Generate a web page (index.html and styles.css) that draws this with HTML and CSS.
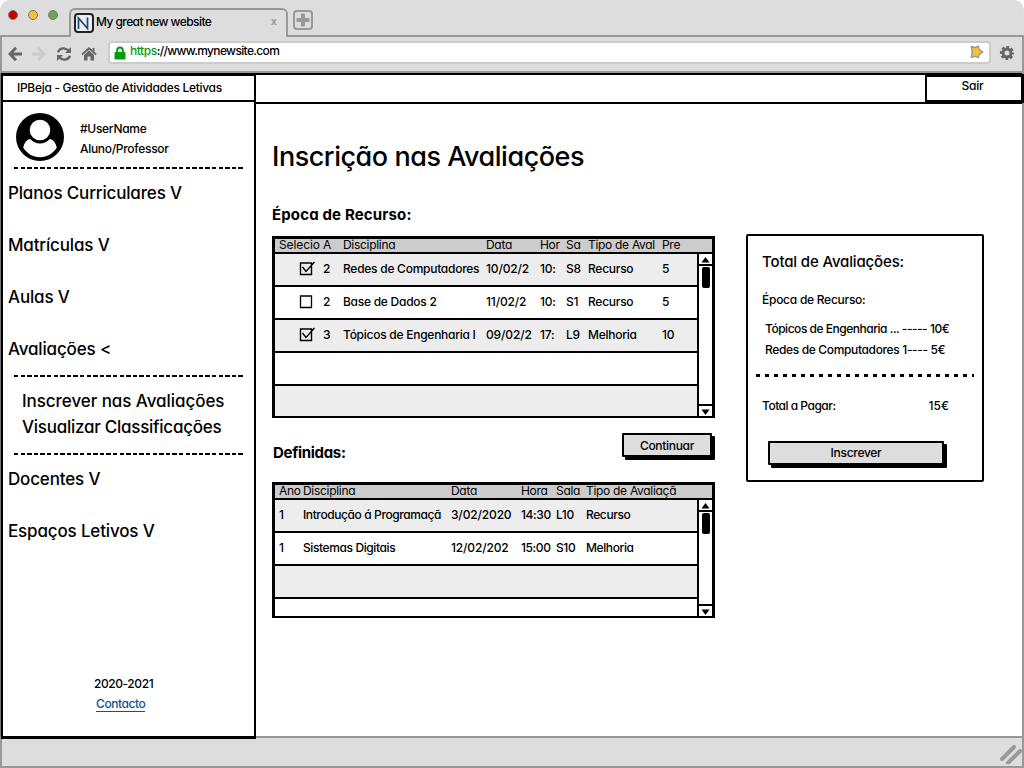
FILE: index.html
```html
<!DOCTYPE html>
<html lang="pt">
<head>
<meta charset="utf-8">
<title>My great new website</title>
<link rel="stylesheet" href="styles.css">
</head>
<body>
<div class="browser">
  <header class="tabstrip">
    <div class="lights"><i class="light red"></i><i class="light yellow"></i><i class="light green"></i></div>
    <div class="tab">
      <span class="favicon"><svg width="16" height="16" viewBox="0 0 16 16"><path d="M2.5 14V3L11.5 13.5V2.5" fill="none" stroke="#174a7c" stroke-width="1.7"/></svg></span>
      <span class="tab-title">My great new website</span>
      <span class="tab-close">x</span>
    </div>
    <div class="strip-rest">
      <span class="newtab"><svg width="16" height="16" viewBox="0 0 16 16"><path d="M8 1.5v13M1.5 8h13" stroke="#999" stroke-width="4"/></svg></span>
    </div>
  </header>
  <div class="toolbar">
    <svg class="icon back" width="14" height="16" viewBox="0 0 14 16"><path d="M8 1.8L2 8l6 6.2M2.2 8H14" fill="none" stroke="#666" stroke-width="3"/></svg>
    <svg class="icon fwd" width="14" height="16" viewBox="0 0 14 16"><path d="M6 1.8L12 8l-6 6.2M11.8 8H0" fill="none" stroke="#ccc" stroke-width="3"/></svg>
    <svg class="icon reload" width="16" height="16" viewBox="0 0 16 16"><path d="M2 6.4C3.4 1.8 9.4 1 12.3 4.6M14 9.6C12.6 14.2 6.600 15 3.700 11.400" fill="none" stroke="#666" stroke-width="2.4"/><path d="M15 1v6H9zM1 15V9h6z" fill="#666"/></svg>
    <svg class="icon home" width="16" height="16" viewBox="0 0 16 16"><path d="M1 8.500L8 2.300l7 6.200" fill="none" stroke="#666" stroke-width="1.800"/><path d="M11.500 2h2v4l-2-2zM3 9l5-4.500L13 9v5.500H9.500v-4h-3v4H3z" fill="#666"/></svg>
    <div class="url">
      <svg class="lock" width="12" height="14" viewBox="0 0 12 14"><path d="M3.200 7V4.200a2.800 2.800 0 0 1 5.600 0V7" fill="none" stroke="#009e0f" stroke-width="2"/><rect x=".5" y="6" width="11" height="7.500" rx="1" fill="#009e0f"/></svg>
      <span class="address"><span class="secure">https</span>://www.mynewsite.com</span>
      <svg class="star" width="14" height="14" viewBox="0 0 14 14"><path d="M1.300 1.500L5 2.400 8.400 1.200 9.200 4.400 12.700 7 9.200 9.400 8.300 12.600 5 11.400 1.300 12.300 2.200 7z" fill="#f1c232" stroke="#999" stroke-width="1.400"/></svg>
    </div>
    <svg class="icon gear" width="16" height="16" viewBox="0 0 16 16"><circle cx="8" cy="8" r="4" fill="none" stroke="#666" stroke-width="3"/><circle cx="8" cy="8" r="6" fill="none" stroke="#666" stroke-width="2.200" stroke-dasharray="2.800 1.912" stroke-dashoffset="1.400"/></svg>
  </div>

  <div class="page">
    <div class="left">
      <div class="brand">IPBeja - Gestão de Atividades Letivas</div>
      <aside class="sidebar">
        <div class="user">
          <svg width="48" height="48" viewBox="0 0 48 48"><circle cx="24" cy="24" r="24"/><path d="M7.200 34.500C8.500 29.500 11 26.300 14.300 26c2.400 2.800 5.800 4.600 9.700 4.600s7.300-1.800 9.700-4.600c3.300.3 5.800 3.500 7.100 8.500C37 40.500 31 44.300 24 44.300S11 40.500 7.200 34.500z" fill="#fff"/><circle cx="24" cy="17" r="10.300" fill="#fff"/></svg>
          <div class="user-text"><div>#UserName</div><div>Aluno/Professor</div></div>
        </div>
        <div class="dashes"></div>
        <nav class="menu">
          <a>Planos Curriculares V</a>
          <a>Matrículas V</a>
          <a>Aulas V</a>
          <a>Avaliações &lt;</a>
        </nav>
        <div class="dashes"></div>
        <nav class="submenu"><a class="enrol-link">Inscrever nas Avaliações</a><a>Visualizar Classificações</a></nav>
        <div class="dashes"></div>
        <nav class="menu lower">
          <a>Docentes V</a>
          <a>Espaços Letivos V</a>
        </nav>
        <footer class="foot"><div class="years">2020-2021</div><a class="link">Contacto</a></footer>
      </aside>
    </div>

    <div class="right">
      <div class="topbar"><div class="exit">Sair</div></div>
      <main class="main">
        <section class="tables">
          <h1>Inscrição nas Avaliações</h1>
          <h2 class="season-title">Época de Recurso:</h2>
          <div class="grid first">
            <div class="row head"><span class="loose">Selecio</span><span>A</span><span>Disciplina</span><span>Data</span><span>Hor</span><span>Sa</span><span>Tipo de Aval</span><span>Pre</span></div>
            <div class="body">
              <div class="rows">
                <div class="row"><span class="check"><svg width="16" height="16" viewBox="0 0 16 16"><path d="M1.500 3h11v11.500h-11zM3.500 7l3.500 4.500L15.500 2" fill="none" stroke="#000" stroke-width="1.400"/></svg></span><span>2</span><span>Redes de Computadores</span><span class="date">10/02/2</span><span>10:</span><span>S8</span><span>Recurso</span><span>5</span></div>
                <div class="row"><span class="check"><svg width="16" height="16" viewBox="0 0 16 16"><path d="M1.500 3h11v11.500h-11z" fill="none" stroke="#000" stroke-width="1.300"/></svg></span><span>2</span><span>Base de Dados 2</span><span class="date">11/02/2</span><span>10:</span><span>S1</span><span>Recurso</span><span>5</span></div>
                <div class="row"><span class="check"><svg width="16" height="16" viewBox="0 0 16 16"><path d="M1.500 3h11v11.500h-11zM3.500 7l3.500 4.500L15.500 2" fill="none" stroke="#000" stroke-width="1.400"/></svg></span><span>3</span><span>Tópicos de Engenharia I</span><span class="date">09/02/2</span><span>17:</span><span>L9</span><span>Melhoria</span><span>10</span></div>
                <div class="row"></div>
                <div class="row"></div>
              </div>
              <div class="scroll"><div class="arrow"><svg width="9" height="6" viewBox="0 0 9 6"><path d="M4.500 0L8.500 5.500h-8z"/></svg></div><div class="thumb"></div><div class="arrow down"><svg width="9" height="6" viewBox="0 0 9 6"><path d="M4.500 6L8.500 .5h-8z"/></svg></div></div>
            </div>
          </div>
          <div class="between"><h2>Definidas:</h2><button class="btn continue">Continuar</button></div>
          <div class="grid second">
            <div class="row head"><span>Ano</span><span>Disciplina</span><span>Data</span><span>Hora</span><span>Sala</span><span>Tipo de Avaliaçã</span></div>
            <div class="body">
              <div class="rows">
                <div class="row"><span>1</span><span>Introdução á Programaçã</span><span class="date">3/02/2020</span><span>14:30</span><span>L10</span><span>Recurso</span></div>
                <div class="row"><span>1</span><span>Sistemas Digitais</span><span class="date">12/02/202</span><span>15:00</span><span>S10</span><span>Melhoria</span></div>
                <div class="row"></div>
                <div class="row"></div>
              </div>
              <div class="scroll"><div class="arrow"><svg width="9" height="6" viewBox="0 0 9 6"><path d="M4.500 0L8.500 5.500h-8z"/></svg></div><div class="thumb"></div><div class="arrow down"><svg width="9" height="6" viewBox="0 0 9 6"><path d="M4.500 6L8.500 .5h-8z"/></svg></div></div>
            </div>
          </div>
        </section>
        <aside class="card">
          <h3>Total de Avaliações:</h3>
          <p class="season">Época de Recurso:</p>
          <div class="items"><div class="item-long">Tópicos de Engenharia ... ----- 10€</div><div>Redes de Computadores 1---- 5€</div></div>
          <div class="dots"></div>
          <div class="total"><span>Total a Pagar:</span><span class="sum">15€</span></div>
          <button class="btn enroll">Inscrever</button>
        </aside>
      </main>
    </div>
  </div>
  <div class="statusbar"><svg width="24" height="24" viewBox="0 0 24 24"><path d="M4 19L16 7M10 23L22 11" stroke="#999" stroke-width="4" stroke-linecap="round"/></svg></div>
</div>
</body>
</html>
```
FILE: styles.css
```css
* { box-sizing: border-box; }
body {
  margin: 0;
  background: #fff;
  color: #000;
  font: 500 12px/20px Inter, "Liberation Sans", sans-serif;
  font-feature-settings: "cv11", "ss03";
}
h1, h2, h3, p { margin: 0; font-weight: 500; }
svg { display: block; flex: none; }
button { font: inherit; font-feature-settings: inherit; color: inherit; }

.browser { width: 1024px; height: 768px; display: flex; flex-direction: column; overflow: hidden; white-space: nowrap; }

/* Tab strip */
.tabstrip { height: 37px; flex: none; display: flex; background: #ddd; border-radius: 10px 10px 0 0; }
.lights { width: 69px; display: flex; gap: 10px; padding: 10px 0 0 8px; border-bottom: 2px solid #999; }
.light { width: 10px; height: 10px; border-radius: 50%; border: 1.5px solid #777; }
.red { background: #c00; }
.yellow { background: #f1c232; }
.green { background: #6aa84f; }
.tab { width: 219px; margin-top: 8px; display: flex; border: 2px solid #999; border-bottom: 0; border-radius: 6px 6px 0 0; padding: 3px 0 0 3px; }
.favicon { width: 20px; height: 20px; border: 2px solid #222; border-radius: 4px; background: #eee; }
.tab-title { margin: -1px 0 0 2px; width: 175px; letter-spacing: -.57px; }
.tab-close { margin-top: -2px; color: #999; font-weight: 700; font-size: 10px; }
.strip-rest { flex: 1; border-bottom: 2px solid #999; padding: 10px 0 0 5px; }
.newtab { display: block; width: 20px; height: 20px; border: 2px solid #999; border-radius: 4px; }

/* Toolbar */
.toolbar { height: 36px; flex: none; display: flex; align-items: flex-start; background: #ddd; border: 2px solid #999; border-top: 0; padding: 4px 7px 0 6px; }
.icon { margin-top: 5px; }
.fwd { margin-left: 10px; }
.reload { margin: 5px 0 0 10px; }
.home { margin: 5px 0 0 9px; }
.url { width: 883px; height: 23px; margin-left: 11px; border: 2px solid #ccc; border-radius: 4px; background: #fff; display: flex; padding: 0 5px 0 4px; }
.lock { margin: 3px 0 0; }
.address { flex: 1; line-height: 15px; padding-left: 4px; letter-spacing: -.65px; }
.secure { color: #009e0f; letter-spacing: -.45px; }
.star { margin: 2px 0 0; }
.gear { margin: 4px 0 0 8px; }

/* Page */
.page { height: 663px; flex: none; display: flex; border-right: 2px solid #999; }
.left { width: 256px; display: flex; flex-direction: column; border-left: 1px solid #777; }
.brand { height: 27px; border: 2px solid #000; border-top-width: 3px; border-bottom: 0; padding-left: 14px; line-height: 23px; letter-spacing: -.3px; }
.sidebar { height: 639px; margin-bottom: -3px; position: relative; z-index: 1; border: 2px solid #000; border-bottom-width: 3px; display: flex; flex-direction: column; }
.user { display: flex; gap: 16px; padding: 11px 0 0 13px; height: 65px; }
.user-text { padding-top: 6px; letter-spacing: -.3px; }
.dashes { flex: none; width: 229px; height: 2px; margin-left: 11px; background: repeating-linear-gradient(90deg, #000 0 4.4px, transparent 4.4px 6.6px); }
.menu { display: flex; flex-direction: column; gap: 28px; padding: 12px 0 14px 5px; font-size: 17px; line-height: 24px; letter-spacing: -.16px; }
.submenu { display: flex; flex-direction: column; padding: 11px 0 13px 19px; font-size: 17px; line-height: 26px; letter-spacing: -.26px; }
.enrol-link { letter-spacing: -.06px; }
.menu.lower { padding-top: 12px; flex: 1; }
.foot { padding: 0 0 22px 91px; letter-spacing: -.42px; }
.link { color: #0b5394; border-bottom: 1px solid #0b5394; display: inline-block; line-height: 15px; margin: 2px 0 0 2px; }

.right { flex: 1; display: flex; flex-direction: column; }
.topbar { height: 31px; flex: none; border-top: 2px solid #000; border-bottom: 2px solid #000; display: flex; justify-content: flex-end; }
.exit { width: 99px; height: 29px; margin: -1px -2px 0 0; position: relative; border: 3px solid #000; border-left-width: 2px; text-align: center; line-height: 18px; padding-right: 3px; letter-spacing: -.2px; }
.main { display: flex; align-items: flex-start; gap: 31px; padding: 34px 0 0 16px; }
.tables { width: 443px; }
h1 { font-size: 27px; line-height: 38px; height: 67px; letter-spacing: -.47px; }
h2 { font-size: 15px; font-weight: 700; line-height: 20px; letter-spacing: -.3px; }
.season-title { letter-spacing: .15px; }

/* Data tables */
.grid { border: 3px solid #000; border-bottom-width: 2px; letter-spacing: -.34px; }
.first { margin-top: 11px; height: 182px; }
.second { height: 136px; }
.row { display: grid; height: 33px; border-bottom: 2px solid #000; padding-left: 4px; line-height: 30px; }
.row:nth-child(odd) { background: #ededed; }
.first .row { grid-template-columns: 44px 20px 143px 54px 26px 22px 74px 1fr; letter-spacing: -.26px; }
.second .row { grid-template-columns: 24px 148px 70px 35px 30px 1fr; letter-spacing: -.4px; }
.grid .row.head { height: 15px; line-height: 12px; background: #ccc; font-weight: 400; letter-spacing: -.3px; }
.loose { letter-spacing: -.1px; }
.date { letter-spacing: -.15px; }
.body { display: flex; overflow: hidden; }
.first .body { height: 162px; }
.second .body { height: 116px; }
.rows { flex: 1; }
.check { padding: 6px 0 0 20px; }
.scroll { width: 15px; border-left: 2px solid #000; display: flex; flex-direction: column; background: #fff; }
.arrow { height: 12px; border-bottom: 2px solid #000; padding: 3px 0 0 2px; }
.thumb { width: 8px; height: 21px; margin: 1px 0 auto 3px; background: #000; border-radius: 2px; }
.arrow.down { border-bottom: 0; border-top: 2px solid #000; }
.between { height: 64px; display: flex; justify-content: space-between; align-items: flex-start; padding-top: 15px; }
.between h2 { padding: 10px 0 0 1px; }
.btn { border: 2px solid #000; background: #ddd; box-shadow: 3px 3px 0 #000; padding: 0; line-height: 20px; border-radius: 1px; letter-spacing: -.3px; }
.continue { width: 90px; height: 24px; margin-right: 3px; line-height: 22px; }

/* Summary */
.card { width: 238px; height: 248px; margin-top: 96px; border: 2px solid #000; border-radius: 2px; padding: 15px 8px; letter-spacing: -.26px; }
.card h3 { font-size: 15px; line-height: 22px; padding-left: 6px; letter-spacing: -.15px; }
.season { padding: 17px 0 0 6px; }
.items { padding: 8px 0 0 9px; line-height: 21px; letter-spacing: -.35px; }
.item-long { letter-spacing: -.48px; }
.dots { height: 3px; margin-top: 14px; background: repeating-linear-gradient(90deg, #000 0 4px, transparent 4px 9px); }
.total { display: flex; justify-content: space-between; padding: 19px 25px 0 6px; letter-spacing: -.5px; }
.sum { letter-spacing: 0; }
.enroll { display: block; width: 176px; height: 24px; margin: 25px 0 0 12px; }

.statusbar { height: 32px; flex: none; border: 2px solid #999; background: #ddd; display: flex; justify-content: flex-end; padding-top: 2px; }
```
